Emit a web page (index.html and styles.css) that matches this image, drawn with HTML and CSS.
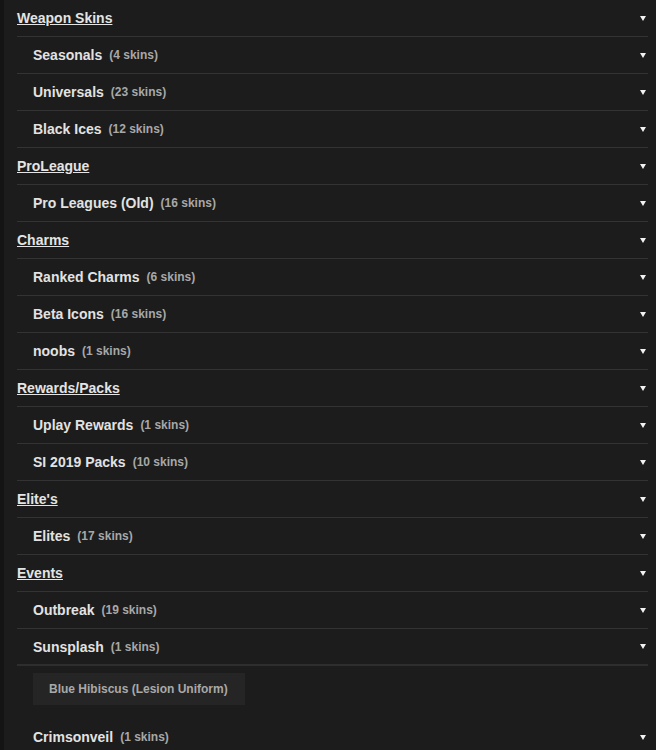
FILE: index.html
```html
<!DOCTYPE html>
<html>
<head>
<meta charset="utf-8">
<link rel="stylesheet" href="styles.css">
</head>
<body>
<div class="page">
  <ul class="list">
    <li class="row head"><a class="title">Weapon Skins</a><span class="arrow"></span></li>
    <li class="row sub"><span class="name">Seasonals</span><span class="count">(4 skins)</span><span class="arrow"></span></li>
    <li class="row sub"><span class="name">Universals</span><span class="count">(23 skins)</span><span class="arrow"></span></li>
    <li class="row sub"><span class="name">Black Ices</span><span class="count">(12 skins)</span><span class="arrow"></span></li>
    <li class="row head"><a class="title">ProLeague</a><span class="arrow"></span></li>
    <li class="row sub"><span class="name">Pro Leagues (Old)</span><span class="count">(16 skins)</span><span class="arrow"></span></li>
    <li class="row head"><a class="title">Charms</a><span class="arrow"></span></li>
    <li class="row sub"><span class="name">Ranked Charms</span><span class="count">(6 skins)</span><span class="arrow"></span></li>
    <li class="row sub"><span class="name">Beta Icons</span><span class="count">(16 skins)</span><span class="arrow"></span></li>
    <li class="row sub"><span class="name">noobs</span><span class="count">(1 skins)</span><span class="arrow"></span></li>
    <li class="row head"><a class="title">Rewards/Packs</a><span class="arrow"></span></li>
    <li class="row sub"><span class="name">Uplay Rewards</span><span class="count">(1 skins)</span><span class="arrow"></span></li>
    <li class="row sub"><span class="name">SI 2019 Packs</span><span class="count">(10 skins)</span><span class="arrow"></span></li>
    <li class="row head"><a class="title">Elite's</a><span class="arrow"></span></li>
    <li class="row sub"><span class="name">Elites</span><span class="count">(17 skins)</span><span class="arrow"></span></li>
    <li class="row head"><a class="title">Events</a><span class="arrow"></span></li>
    <li class="row sub"><span class="name">Outbreak</span><span class="count">(19 skins)</span><span class="arrow"></span></li>
    <li class="row sub open"><span class="name">Sunsplash</span><span class="count">(1 skins)</span><span class="arrow"></span></li>
    <li class="panel"><span class="skin">Blue Hibiscus (Lesion Uniform)</span></li>
    <li class="row sub last"><span class="name">Crimsonveil</span><span class="count">(1 skins)</span><span class="arrow"></span></li>
  </ul>
</div>
</body>
</html>
```
FILE: styles.css
```css
html, body {
  margin: 0;
  padding: 0;
  background: #1c1c1c;
}
body {
  font-family: "Liberation Sans", Arial, sans-serif;
  color: #e2e2e2;
  overflow: hidden;
}
.page {
  border-left: 4px solid #141414;
  min-height: 750px;
  padding-left: 13px;
  padding-right: 8px;
}
.list {
  list-style: none;
  margin: 0;
  padding: 0;
}
.row {
  display: flex;
  align-items: center;
  height: 36px;
  border-bottom: 1px solid #333333;
}
.head .title {
  font-size: 14px;
  font-weight: bold;
  text-decoration: underline;
  color: #e4e4e4;
}
.sub {
  padding-left: 16px;
}
.sub .name {
  font-size: 14px;
  font-weight: bold;
  color: #e2e2e2;
}
.sub .count {
  font-size: 12px;
  font-weight: bold;
  color: #a8a8a8;
  margin-left: 7px;
}
.arrow {
  margin-left: auto;
  margin-right: 2px;
  width: 0;
  height: 0;
  border-left: 3px solid transparent;
  border-right: 3px solid transparent;
  border-top: 5px solid #f2f2f2;
}
.open {
  border-bottom: 2px solid #2e2e2e;
  height: 35px;
}
.panel {
  padding: 7px 0 14px 16px;
}
.skin {
  display: inline-block;
  background: #252525;
  color: #a9a9a9;
  font-size: 12px;
  font-weight: bold;
  height: 32px;
  line-height: 32px;
  padding: 0 17px 0 16px;
}
.last {
  border-bottom: none;
}
```
